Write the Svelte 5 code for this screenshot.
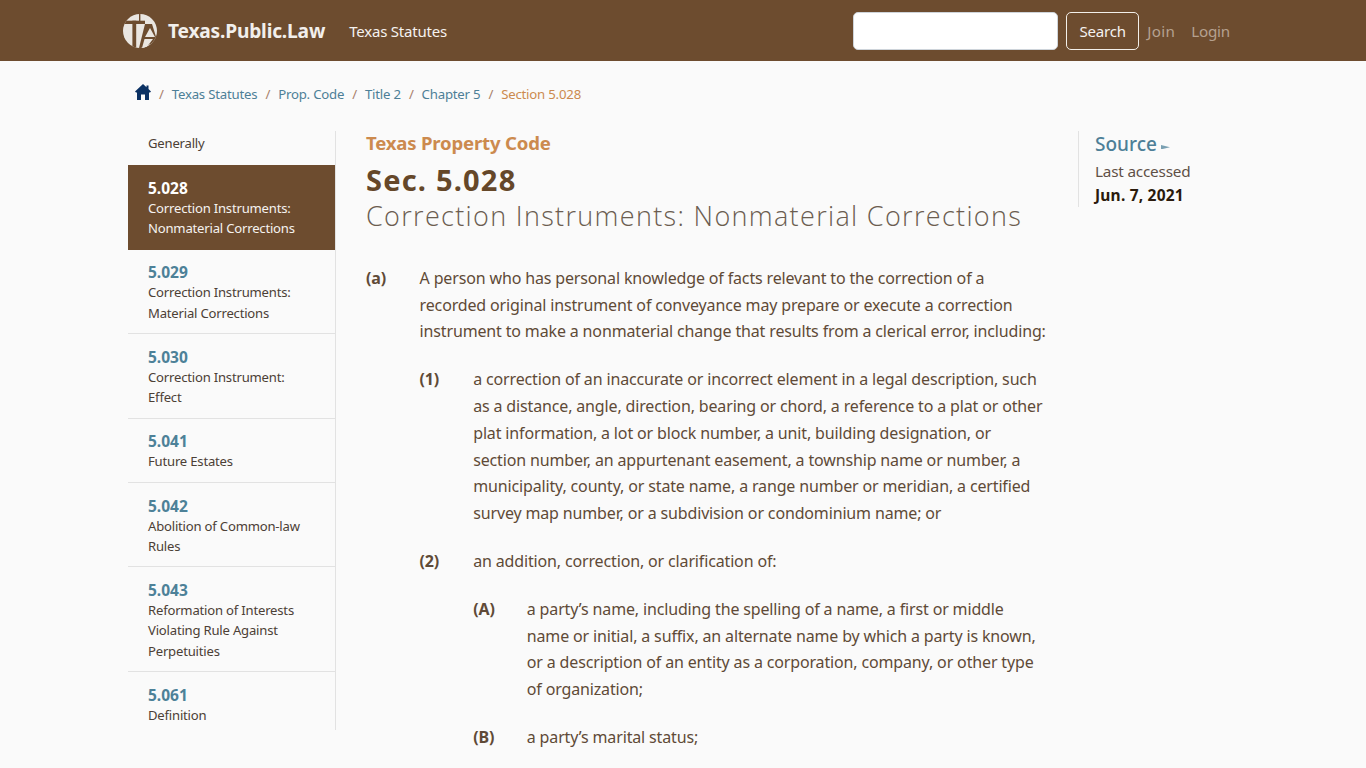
<script>
  const crumbs = ['Texas Statutes', 'Prop. Code', 'Title 2', 'Chapter 5'];
  const toc = [
    { n: '5.029', lines: ['Correction Instruments:', 'Material Corrections'] },
    { n: '5.030', lines: ['Correction Instrument:', 'Effect'] },
    { n: '5.041', lines: ['Future Estates'] },
    { n: '5.042', lines: ['Abolition of Common-law', 'Rules'] },
    { n: '5.043', lines: ['Reformation of Interests', 'Violating Rule Against', 'Perpetuities'] },
    { n: '5.061', lines: ['Definition'] }
  ];
</script>

<header class="nav">
  <div class="brand">
    <svg class="logo" viewBox="0 0 34 34" width="34" height="34" aria-hidden="true">
      <defs><clipPath id="disc"><circle cx="17" cy="17" r="17" /></clipPath></defs>
      <g clip-path="url(#disc)">
        <rect width="34" height="34" fill="#eae6e1" />
        <g fill="#6d4c2f">
          <rect x="0" y="6.700" width="22" height="3.300" />
          <rect x="9.400" y="6.700" width="3.800" height="28" />
          <rect x="16" y="0" width="1.400" height="7" />
          <polygon points="22,10 29,10 34,26 30,29 18,34 16,34" />
        </g>
        <polygon fill="#eae6e1" points="27,14 32,23 22,23" />
        <polygon fill="#eae6e1" points="21.500,25 30,25 23,34 19,34" />
      </g>
    </svg>
    <span class="name">Texas.Public.Law</span>
    <span class="statutes">Texas Statutes</span>
  </div>
  <div class="tools">
    <input class="search" type="text" aria-label="Search" />
    <button class="btn">Search</button>
    <span class="muted join">Join</span>
    <span class="muted">Login</span>
  </div>
</header>

<nav class="crumbs">
  <svg class="home" viewBox="0 0 16 16" width="16" height="16" aria-hidden="true"><path fill="#0b3163" d="M8 0L11.500 3.200V1.500H13.500V5.100L16 7.500L15 8.500H14V16H10V10.500H6V16H2V8.500H1L0 7.500Z"/></svg>
  {#each crumbs as c}
    <span class="sep">/</span><span class="crumb">{c}</span>
  {/each}
  <span class="sep">/</span><span class="current">Section 5.028</span>
</nav>

<div class="layout">
  <aside class="toc">
    <div class="general">Generally</div>
    <div class="item active">
      <div class="num">5.028</div>
      <div class="t">Correction Instruments:</div>
      <div class="t">Nonmaterial Corrections</div>
    </div>
    {#each toc as it, i}
      <div class="item" class:last={i === toc.length - 1}>
        <div class="num">{it.n}</div>
        {#each it.lines as l}<div class="t">{l}</div>{/each}
      </div>
    {/each}
  </aside>

  <main class="content">
    <div class="code">Texas Property Code</div>
    <h1>Sec. 5.028</h1>
    <h2>Correction Instruments: Nonmaterial Corrections</h2>

    <div class="para first">
      <b>(a)</b>
      <p>A person who has personal knowledge of facts relevant to the correction of a<br />recorded original instrument of conveyance may prepare or execute a correction<br />instrument to make a nonmaterial change that results from a clerical error, including:</p>
    </div>
    <div class="para lvl2">
      <b>(1)</b>
      <p>a correction of an inaccurate or incorrect element in a legal description, such<br />as a distance, angle, direction, bearing or chord, a reference to a plat or other<br />plat information, a lot or block number, a unit, building designation, or<br />section number, an appurtenant easement, a township name or number, a<br />municipality, county, or state name, a range number or meridian, a certified<br />survey map number, or a subdivision or condominium name; or</p>
    </div>
    <div class="para lvl2">
      <b>(2)</b>
      <p>an addition, correction, or clarification of:</p>
    </div>
    <div class="para lvl3">
      <b>(A)</b>
      <p>a party’s name, including the spelling of a name, a first or middle<br />name or initial, a suffix, an alternate name by which a party is known,<br />or a description of an entity as a corporation, company, or other type<br />of organization;</p>
    </div>
    <div class="para lvl3">
      <b>(B)</b>
      <p>a party’s marital status;</p>
    </div>
  </main>

  <aside class="source">
    <div class="src">Source<svg class="arrow" viewBox="0 0 9 4.400" width="9" height="4.400" aria-hidden="true"><polygon fill="#7aa0b2" points="0,0 9,2.200 0,4.400" /></svg></div>
    <div class="la">Last accessed</div>
    <div class="date">Jun. 7, 2021</div>
  </aside>
</div>

<style>
  :global(html), :global(body) { margin: 0; height: 768px; overflow: hidden; background: #fafafa; }
  :global(body) { font-family: "Noto Sans", "Open Sans", sans-serif; color: #5f4a37; }

  .nav {
    height: 61px; background: #6d4c2f; display: flex; align-items: center;
    justify-content: space-between; padding: 0 136px 0 123px; box-sizing: border-box;
  }
  .brand { display: flex; align-items: center; }
  .logo { margin-right: 11px; }
  .name { font-size: 19.200px; font-weight: 700; color: #f2efec; letter-spacing: -0.2px; margin-right: 24px; }
  .statutes { font-size: 15px; color: #f5f2ef; letter-spacing: -0.2px; }
  .tools { display: flex; align-items: center; }
  .search { width: 205px; height: 38px; box-sizing: border-box; border: 1px solid #ced4da; border-radius: 5px; background: #fff; padding: 0; margin: 0 8px 0 0; }
  .btn {
    width: 73px; height: 38px; box-sizing: border-box; border: 1px solid #f3efe9; border-radius: 5px;
    background: transparent; color: #f5f2ef; font: 15px "Noto Sans", sans-serif; letter-spacing: -0.2px; padding: 0; margin-right: 8px;
  }
  .muted { font-size: 15.200px; color: #b5a18f; letter-spacing: -0.2px; margin-right: 16px; }
  .muted:last-child { margin-right: 0; }
  .join { letter-spacing: 0.35px; }

  .crumbs { display: flex; align-items: center; height: 66px; padding-left: 135px; font-size: 13.200px; letter-spacing: -0.2px; box-sizing: border-box; }
  .home { margin-right: 8px; position: relative; top: -2px; }
  .sep { color: #a8806b; margin-right: 8px; }
  .crumb { color: #4d7f97; margin-right: 8px; }
  .current { color: #cc8a4e; }

  .layout { display: flex; align-items: flex-start; padding-left: 128px; padding-top: 4px; }
  .toc { width: 208px; height: 599px; border-right: 1px solid #e2e2e2; overflow: hidden; flex: none; box-sizing: border-box; }
  .general { height: 34px; padding-left: 20px; font-size: 13.100px; line-height: 24px; color: #4c4036; letter-spacing: -0.2px; }
  .item { padding: 12.700px 20px 10.400px; border-bottom: 1px solid #e2e2e2; }
  .item.last { border-bottom: 0; }
  .num { font-size: 15.500px; font-weight: 700; line-height: 20px; color: #4d8198; }
  .t { font-size: 13.100px; line-height: 20.200px; color: #4c4036; letter-spacing: -0.2px; white-space: nowrap; }
  .item.active { background: #6d4c2f; border-bottom: 0; padding-top: 13px; padding-bottom: 11.300px; }
  .active .num { color: #fff; }
  .active .t { color: #f5f2ef; }

  .content { width: 712px; padding-left: 30px; flex: none; box-sizing: border-box; color: #5f4a37; }
  .code { font-size: 18.600px; font-weight: 700; color: #cc8a4e; line-height: 24px; letter-spacing: -0.2px; }
  h1 { font-size: 29px; font-weight: 700; letter-spacing: 1.200px; margin: 7px 0 0; line-height: 36px; color: #654729; }
  h2 { font-size: 27px; font-weight: 300; letter-spacing: 1.330px; margin: 0; line-height: 36px; color: #6b5d50; font-family: "Open Sans", sans-serif; white-space: nowrap; }
  .para { display: flex; font-size: 16px; line-height: 26.700px; letter-spacing: -0.15px; }
  .para b { flex: none; width: 53.600px; font-weight: 700; }
  .para p { margin: 0; white-space: nowrap; }
  .first { margin-top: 30.800px; }
  .lvl2 { padding-left: 53.600px; margin-top: 21.300px; }
  .first + .lvl2 { margin-top: 21.500px; }
  .lvl3 { padding-left: 107.200px; margin-top: 21.300px; }

  .source { margin-left: 30px; width: 150px; height: 76px; border-left: 1px solid #e2e2e2; padding-left: 16px; flex: none; }
  .src { font-size: 19px; color: #4d7f97; line-height: 26px; font-weight: 500; }
  .arrow { margin-left: 4px; vertical-align: 2px; }
  .la { font-size: 15.300px; color: #5f5046; line-height: 26px; letter-spacing: -0.2px; margin-top: 1px; }
  .date { font-size: 15.500px; font-weight: 700; color: #2a1a0c; line-height: 22px; letter-spacing: 0.2px; }
</style>
